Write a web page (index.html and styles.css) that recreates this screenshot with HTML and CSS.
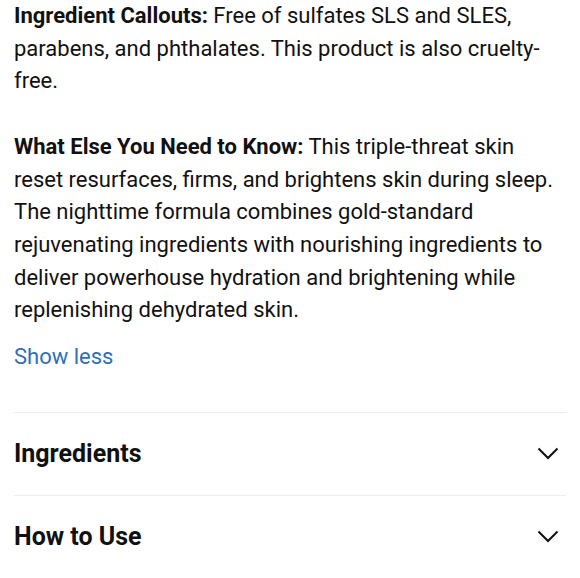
FILE: index.html
```html
<!DOCTYPE html>
<html>
<head>
<meta charset="utf-8">
<link rel="stylesheet" href="styles.css">
</head>
<body>
<div class="page">
  <p class="para"><strong>Ingredient Callouts:</strong> Free of sulfates SLS and SLES, parabens, and phthalates. This product is also cruelty-free.</p>
  <p class="para"><strong>What Else You Need to Know:</strong> This triple-threat skin reset resurfaces, firms, and brightens skin during sleep. The nighttime formula combines gold-standard rejuvenating ingredients with nourishing ingredients to deliver powerhouse hydration and brightening while replenishing dehydrated skin.</p>
  <a class="toggle" href="#">Show less</a>
  <div class="accordion">
    <div class="row">
      <span class="row-title">Ingredients</span>
      <svg class="chev" width="22" height="13" viewBox="0 0 22 13"><path d="M1.5 1.5 L11 11 L20.5 1.5" fill="none" stroke="#111" stroke-width="2"/></svg>
    </div>
    <div class="row">
      <span class="row-title">How to Use</span>
      <svg class="chev" width="22" height="13" viewBox="0 0 22 13"><path d="M1.5 1.5 L11 11 L20.5 1.5" fill="none" stroke="#111" stroke-width="2"/></svg>
    </div>
  </div>
</div>
</body>
</html>
```
FILE: styles.css
```css
html, body {
  margin: 0;
  padding: 0;
  background: #fff;
}
.page {
  padding: 0 14px;
  font-family: Roboto, "Liberation Sans", sans-serif;
  color: #111;
}
.para {
  margin: 0 0 32.7px 0;
  font-size: 22px;
  line-height: 32.7px;
}
.para:nth-of-type(2) {
  margin-bottom: 14px;
}
.para strong {
  font-weight: 700;
}
.toggle {
  display: block;
  font-size: 22px;
  line-height: 32.7px;
  color: #2f6fb6;
  text-decoration: none;
}
.accordion {
  margin-top: 38px;
  border-top: 1px solid #ececec;
}
.row {
  display: flex;
  align-items: center;
  justify-content: space-between;
  height: 82px;
  border-bottom: 1px solid #ececec;
}
.row-title {
  font-size: 25px;
  font-weight: 700;
}
.chev {
  margin-right: 7px;
}
```
